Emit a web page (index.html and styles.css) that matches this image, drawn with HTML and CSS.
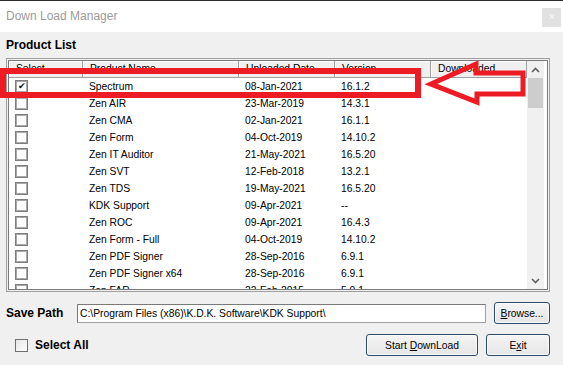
FILE: index.html
```html
<!DOCTYPE html>
<html>
    <head>
        <meta charset="UTF-8">
        <title>Down Load Manager</title>
        <link rel="stylesheet" href="styles.css">
    </head>
    <body>
        <div class="window">
            <div class="titlebar">
                <span class="title">Down Load Manager</span>
                <span class="closebtn">&#x2715;</span>
            </div>

            <div class="mainpanel">
                <div class="grouplabel">Product List</div>

                <div class="listbox">
                    <div class="listinner">
                        <div class="listview">
                            <div class="listhead">
                                <div class="headcell">Select</div>
                                <div class="headcell">Product Name</div>
                                <div class="headcell">Uploaded Date</div>
                                <div class="headcell">Version</div>
                                <div class="headcell">Downloaded</div>
                            </div>
                            <div class="listrows">
                                <div class="row"><div class="cell"><span class="chk checked">&#x2714;</span></div><div class="cell">Spectrum</div><div class="cell">08-Jan-2021</div><div class="cell">16.1.2</div><div class="cell"></div></div>
                                <div class="row"><div class="cell"><span class="chk"></span></div><div class="cell">Zen AIR</div><div class="cell">23-Mar-2019</div><div class="cell">14.3.1</div><div class="cell"></div></div>
                                <div class="row"><div class="cell"><span class="chk"></span></div><div class="cell">Zen CMA</div><div class="cell">02-Jan-2021</div><div class="cell">16.1.1</div><div class="cell"></div></div>
                                <div class="row"><div class="cell"><span class="chk"></span></div><div class="cell">Zen Form</div><div class="cell">04-Oct-2019</div><div class="cell">14.10.2</div><div class="cell"></div></div>
                                <div class="row"><div class="cell"><span class="chk"></span></div><div class="cell">Zen IT Auditor</div><div class="cell">21-May-2021</div><div class="cell">16.5.20</div><div class="cell"></div></div>
                                <div class="row"><div class="cell"><span class="chk"></span></div><div class="cell">Zen SVT</div><div class="cell">12-Feb-2018</div><div class="cell">13.2.1</div><div class="cell"></div></div>
                                <div class="row"><div class="cell"><span class="chk"></span></div><div class="cell">Zen TDS</div><div class="cell">19-May-2021</div><div class="cell">16.5.20</div><div class="cell"></div></div>
                                <div class="row"><div class="cell"><span class="chk"></span></div><div class="cell">KDK Support</div><div class="cell">09-Apr-2021</div><div class="cell">--</div><div class="cell"></div></div>
                                <div class="row"><div class="cell"><span class="chk"></span></div><div class="cell">Zen ROC</div><div class="cell">09-Apr-2021</div><div class="cell">16.4.3</div><div class="cell"></div></div>
                                <div class="row"><div class="cell"><span class="chk"></span></div><div class="cell">Zen Form - Full</div><div class="cell">04-Oct-2019</div><div class="cell">14.10.2</div><div class="cell"></div></div>
                                <div class="row"><div class="cell"><span class="chk"></span></div><div class="cell">Zen PDF Signer</div><div class="cell">28-Sep-2016</div><div class="cell">6.9.1</div><div class="cell"></div></div>
                                <div class="row"><div class="cell"><span class="chk"></span></div><div class="cell">Zen PDF Signer x64</div><div class="cell">28-Sep-2016</div><div class="cell">6.9.1</div><div class="cell"></div></div>
                                <div class="row"><div class="cell"><span class="chk"></span></div><div class="cell">Zen FAR</div><div class="cell">22-Feb-2015</div><div class="cell">5.0.1</div><div class="cell"></div></div>
                            </div>
                        </div>
                        <div class="scrollbar">
                            <div class="scrollarrow">
                                <svg width="9" height="6" viewBox="0 0 9 6"><path d="M1 5 L4.5 1.5 L8 5" fill="none" stroke="#606060" stroke-width="1.6"/></svg>
                            </div>
                            <div class="scrollthumb"></div>
                            <div class="scrollspace"></div>
                            <div class="scrollarrow">
                                <svg width="9" height="6" viewBox="0 0 9 6"><path d="M1 1 L4.5 4.5 L8 1" fill="none" stroke="#606060" stroke-width="1.6"/></svg>
                            </div>
                        </div>
                    </div>
                </div>

                <div class="pathrow">
                    <span class="fieldlabel">Save Path</span>
                    <div class="pathbox">C:\Program Files (x86)\K.D.K. Software\KDK Support\</div>
                    <button class="winbtn browsebtn"><u>B</u>rowse...</button>
                </div>

                <div class="bottomrow">
                    <label class="selectall"><span class="chkbox"></span><span class="fieldlabel">Select All</span></label>
                    <div class="btngroup">
                        <button class="winbtn startbtn">Start <u>D</u>ownLoad</button>
                        <button class="winbtn exitbtn">E<u>x</u>it</button>
                    </div>
                </div>
            </div>

            <svg class="markup" width="563" height="365" viewBox="0 0 563 365">
                <rect x="3" y="71" width="415" height="24" fill="none" stroke="#ed1c24" stroke-width="6"/>
                <polygon points="431,84 476,64 476,73 523,73 523,94 477,94 477,102" fill="none" stroke="#ed1c24" stroke-width="5" stroke-linejoin="miter"/>
            </svg>
        </div>
    </body>
</html>
```

FILE: styles.css
```css
* {
    box-sizing: border-box;
}
body {
    margin: 0;
    background-color: #f0f0f0;
    font-family: "Liberation Sans", Arial, sans-serif;
}
.window {
    position: relative;
    width: 563px;
    height: 365px;
    overflow: hidden;
}
.titlebar {
    display: flex;
    justify-content: space-between;
    align-items: flex-start;
    height: 32px;
    background-color: white;
    border-top: 1px solid #2b2b2b;
    padding: 0 2px 0 6px;
}
.title {
    margin-top: 8px;
    font-size: 12px;
    color: #9b9b9b;
}
.closebtn {
    width: 19px;
    height: 19px;
    margin-top: 7px;
    background-color: #e1e1e1;
    color: #f7f7f7;
    font-size: 9px;
    line-height: 19px;
    text-align: center;
}
.mainpanel {
    padding: 0 13px 0 6px;
}
.grouplabel {
    margin-top: 6px;
    height: 20px;
    line-height: 14px;
    font-size: 12px;
    font-weight: bold;
}
.listbox {
    height: 234px;
    border: 1px solid #a0a0a0;
    padding: 1px;
}
.listinner {
    display: flex;
    height: 100%;
    border: 1px solid #7a7a7a;
    background-color: white;
    padding-right: 3px;
    overflow: hidden;
}
.listview {
    flex: 1;
    overflow: hidden;
    font-size: 10.3px;
}
.listhead, .row {
    display: grid;
    grid-template-columns: 74px 156px 96px 96px 96px;
}
.listhead {
    height: 17px;
}
.headcell {
    background-color: #f0f0f0;
    border-right: 1px solid #a0a0a0;
    border-bottom: 1px solid #a0a0a0;
    box-shadow: inset 1px 1px 0 white;
    padding-left: 7px;
    line-height: 16px;
    white-space: nowrap;
    overflow: hidden;
}
.row {
    height: 17px;
}
.cell {
    padding-left: 6px;
    line-height: 17px;
    white-space: nowrap;
}
.cell:first-child {
    padding-left: 6px;
    padding-top: 2px;
}
.chk {
    display: block;
    width: 13px;
    height: 13px;
    border: 1px solid #7d7d7d;
    box-shadow: inset 0 0 0 1px #a8a8a8;
    background-color: white;
    font-size: 9px;
    line-height: 11px;
    text-align: center;
    color: #111;
}
.scrollbar {
    display: flex;
    flex-direction: column;
    width: 17px;
    background-color: #f0f0f0;
}
.scrollarrow {
    display: flex;
    justify-content: center;
    align-items: center;
    height: 17px;
}
.scrollthumb {
    height: 30px;
    margin: 0 1px;
    background-color: #cdcdcd;
}
.scrollspace {
    flex: 1;
}
.pathrow {
    display: flex;
    align-items: center;
    margin-top: 10px;
    height: 22px;
}
.fieldlabel {
    font-size: 12px;
    font-weight: bold;
}
.pathrow .fieldlabel {
    width: 71px;
}
.pathbox {
    width: 409px;
    height: 19px;
    background-color: white;
    border: 1px solid #a0a0a0;
    border-top-color: #7a7a7a;
    border-left-color: #7a7a7a;
    padding-left: 2px;
    font-size: 10.3px;
    line-height: 17px;
    white-space: nowrap;
}
.winbtn {
    height: 22px;
    border: 1px solid #2f4a64;
    border-radius: 3px;
    background: linear-gradient(#f4f4f4, #e6e6e6);
    box-shadow: inset 0 0 0 1px #fbfbfb;
    font-family: "Liberation Sans", Arial, sans-serif;
    font-size: 10.3px;
    color: black;
    padding: 0;
}
.browsebtn {
    width: 56px;
    margin-left: 8px;
}
.bottomrow {
    display: flex;
    justify-content: space-between;
    align-items: center;
    margin-top: 10px;
    height: 22px;
}
.selectall {
    display: flex;
    align-items: center;
    padding-left: 9px;
}
.chkbox {
    width: 13px;
    height: 13px;
    margin-right: 7px;
    border: 1px solid #707070;
    background: linear-gradient(135deg, #e6e6e6, white);
}
.btngroup {
    display: flex;
    gap: 8px;
}
.startbtn {
    width: 112px;
}
.exitbtn {
    width: 64px;
}
.markup {
    position: absolute;
    top: 0;
    left: 0;
    pointer-events: none;
}
```
